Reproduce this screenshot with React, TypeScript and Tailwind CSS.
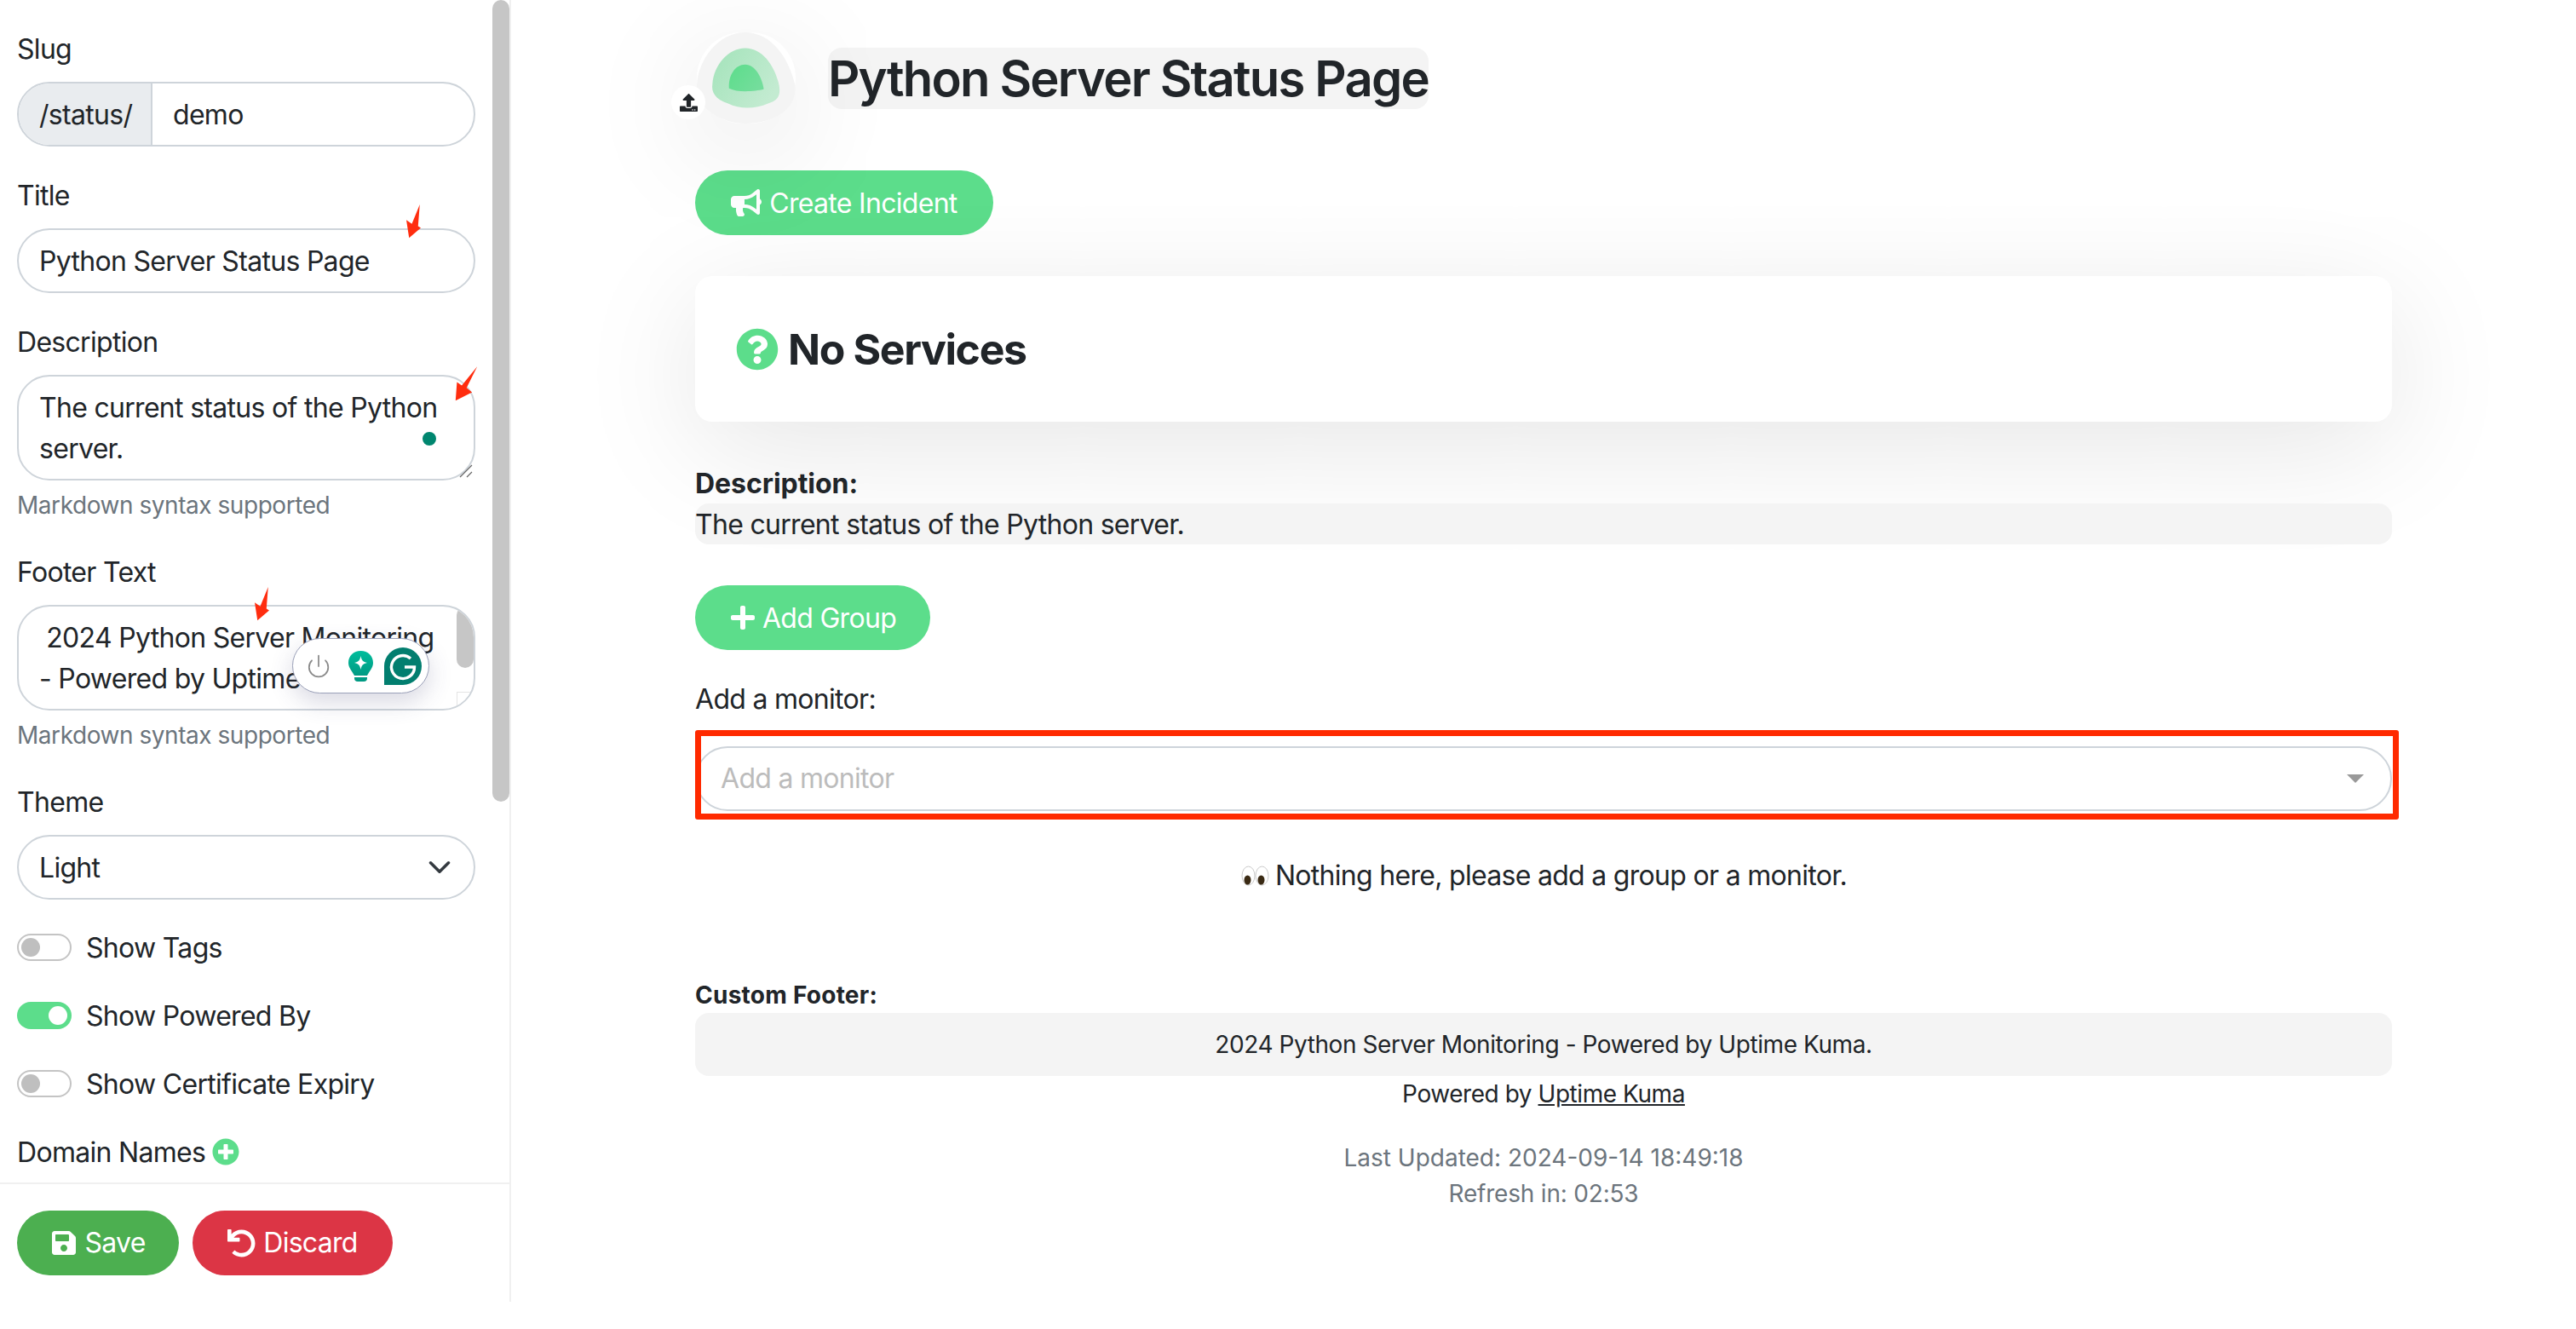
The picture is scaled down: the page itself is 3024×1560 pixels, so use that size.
import { Power } from "lucide-react";
import { FaBullhorn, FaPlus, FaPlusCircle, FaQuestionCircle, FaSave, FaUndo, FaUpload } from "react-icons/fa";

function Label({ children }: { children: string }) {
  return <div className="mb-[14px] pt-[2px]">{children}</div>;
}

function Toggle({ on, label }: { on?: boolean; label: string }) {
  return (
    <div className="mb-[32px] flex h-[48px] items-center">
      {on ? (
        <div className="flex h-[32px] w-[64px] items-center justify-end rounded-full bg-[#5cdd8b] pr-[5px]">
          <div className="h-[22px] w-[22px] rounded-full bg-white" />
        </div>
      ) : (
        <div className="flex h-[32px] w-[64px] items-center rounded-full border-2 border-[#c4c4c4] bg-white pl-[3px]">
          <div className="h-[22px] w-[22px] rounded-full bg-[#bfbfbf]" />
        </div>
      )}
      <span className="ml-[17px] pt-[2px]">{label}</span>
    </div>
  );
}

function ResizeGrip({ className }: { className: string }) {
  return (
    <svg className={`absolute ${className}`} width="16" height="16" viewBox="0 0 16 16" stroke="#666" strokeWidth="1.2">
      <path d="M1 15 15 1M9 15l6-6" />
    </svg>
  );
}

function Logo() {
  return (
    <div className="relative h-[107px] w-[116px] rounded-full shadow-[0_30px_140px_rgba(0,0,0,0.13)]">
      <svg className="h-full w-full" viewBox="115 55 347 320">
        <defs>
          <linearGradient id="mid" x1="0" y1="0" x2="1" y2="0.6">
            <stop offset="0" stopColor="#a3e3ba" />
            <stop offset="1" stopColor="#c3ebd1" />
          </linearGradient>
          <linearGradient id="core" x1="0" y1="0" x2="1" y2="0.6">
            <stop offset="0" stopColor="#5cdd8b" />
            <stop offset="1" stopColor="#74dd9c" />
          </linearGradient>
        </defs>
        <path d="M285 55C380 55 440 150 460 240C470 320 390 375 285 375C200 375 110 320 115 240C120 150 190 55 285 55Z" fill="#f4f4f4" />
        <path d="M285 110C345 110 385 170 400 225C415 275 400 295 365 305C320 325 265 325 225 305C180 290 165 265 170 235C175 170 225 110 285 110Z" fill="url(#mid)" />
        <path d="M285 168C320 168 345 215 350 255C320 262 260 268 228 252C225 205 250 168 285 168Z" fill="url(#core)" />
      </svg>
      <div className="absolute left-[-30px] top-[62px] flex h-[40px] w-[40px] items-center justify-center rounded-full bg-white text-[#212529]">
        <FaUpload size={21} />
      </div>
    </div>
  );
}

function GrammarlyPill() {
  return (
    <div className="absolute left-[343px] top-[749px] z-10 flex h-[65px] w-[161px] items-center rounded-full border border-[#9aa0b8] bg-white shadow-[0_10px_28px_rgba(60,60,110,0.2)]">
      <Power className="ml-[15px] text-[#8a8a8a]" size={30} strokeWidth={1.4} />
      <svg className="ml-[20px]" width="29" height="36" viewBox="0 0 29 36">
        <defs>
          <linearGradient id="bulb" x1="0" y1="0" x2="0" y2="1">
            <stop offset="0" stopColor="#00bd9c" />
            <stop offset="1" stopColor="#009a83" />
          </linearGradient>
        </defs>
        <path d="M14.5 0C23 0 29 6 29 14C29 20 25 23 22 29H7C4 23 0 20 0 14C0 6 6 0 14.5 0Z" fill="url(#bulb)" />
        <path d="M7 31H22V32A4 4 0 0 1 18 36H11A4 4 0 0 1 7 32Z" fill="#009a83" />
        <path d="M14.5 6C15.5 11 17 13 22 14C17 15 15.5 17 14.5 22C13.5 17 12 15 7 14C12 13 13.5 11 14.5 6Z" fill="#fff" />
      </svg>
      <svg className="ml-[13px]" width="44" height="44" viewBox="0 0 44 44">
        <path d="M22 0A22 22 0 0 1 22 44H0V22A22 22 0 0 1 22 0Z" fill="#027e6f" />
        <path d="M31 13A13.5 13.5 0 1 0 35.5 23H24" fill="none" stroke="#fff" strokeWidth="3.4" />
      </svg>
    </div>
  );
}

function Sidebar() {
  return (
    <aside className="relative z-10 flex h-[1528px] w-[600px] shrink-0 flex-col border-r-2 border-[#f0f0f0] bg-white">
      <div className="h-[1388px] overflow-hidden px-[20px] pt-[32px]">
        <div className="w-[538px]">
          <Label>Slug</Label>
          <div className="mb-[32px] flex h-[76px] overflow-hidden rounded-full border-2 border-[#ced4da]">
            <div className="flex w-[157px] items-center border-r-2 border-[#ced4da] bg-[#e9ecef] pl-[24px] pt-[2px]">/status/</div>
            <div className="flex items-center pl-[24px] pt-[2px]">demo</div>
          </div>

          <Label>Title</Label>
          <div className="mb-[32px] flex h-[76px] items-center rounded-full border-2 border-[#ced4da] pl-[24px] pt-[2px]">Python Server Status Page</div>

          <Label>Description</Label>
          <div className="relative h-[124px] rounded-[38px] border-2 border-[#ced4da] pl-[24px] pt-[13px]">
            <div>The current status of the Python</div>
            <div>server.</div>
            <div className="absolute left-[474px] top-[65px] h-[16px] w-[16px] rounded-full bg-[#00866f]" />
            <ResizeGrip className="bottom-[1px] right-[1px]" />
          </div>
          <div className="mb-[32px] mt-[8px] text-[28px] leading-[42px] tracking-[-0.45px] text-[#6c757d]">Markdown syntax supported</div>

          <Label>Footer Text</Label>
          <div className="relative h-[124px] overflow-hidden rounded-[38px] border-2 border-[#ced4da] pl-[24px] pt-[13px]">
            <div className="whitespace-pre"> 2024 Python Server Monitoring</div>
            <div>- Powered by Uptime Kuma.</div>
            <div className="absolute right-0 top-0 h-[72px] w-[20px] rounded-full bg-[#c6c6c6]" />
            <div className="absolute bottom-0 right-0 h-[20px] w-[20px] border-l border-t border-[#e4e4e4] bg-white" />
            <ResizeGrip className="bottom-[1px] right-[1px]" />
          </div>
          <div className="mb-[32px] mt-[8px] text-[28px] leading-[42px] tracking-[-0.45px] text-[#6c757d]">Markdown syntax supported</div>

          <Label>Theme</Label>
          <div className="mb-[32px] flex h-[76px] items-center justify-between rounded-full border-2 border-[#ced4da] pl-[24px] pr-[26px]">
            <span className="pt-[2px]">Light</span>
            <svg width="28" height="28" viewBox="0 0 16 16" fill="none" stroke="#343a40" strokeWidth="2" strokeLinecap="round" strokeLinejoin="round">
              <path d="m2 5 6 6 6-6" />
            </svg>
          </div>

          <Toggle label="Show Tags" />
          <Toggle on label="Show Powered By" />
          <Toggle label="Show Certificate Expiry" />

          <div className="flex h-[48px] items-center">
            <span className="pt-[2px]">Domain Names</span>
            <FaPlusCircle className="ml-[8px] text-[#5cdd8b]" size={32} />
          </div>
        </div>
      </div>
      <div className="flex h-[140px] gap-[16px] border-t-2 border-[#f0f0f0] pl-[20px] pt-[31px]">
        <button className="flex h-[76px] w-[190px] items-center justify-center gap-[8px] rounded-full bg-[#4caf50] text-white">
          <FaSave size={32} />
          Save
        </button>
        <button className="flex h-[76px] w-[235px] items-center justify-center gap-[9px] rounded-full bg-[#dc3545] text-white">
          <FaUndo size={33} />
          Discard
        </button>
      </div>
      <div className="absolute right-0 top-0 h-[941px] w-[20px] rounded-full bg-[#c6c6c6]" />
    </aside>
  );
}

function Eyes() {
  return (
    <svg className="mr-[6px]" width="35" height="28" viewBox="0 0 32 28">
      <ellipse cx="8" cy="14" rx="7.5" ry="11" fill="#fff" stroke="#c9c9c9" />
      <ellipse cx="24" cy="14" rx="7.5" ry="11" fill="#fff" stroke="#c9c9c9" />
      <ellipse cx="7" cy="19" rx="4" ry="5.5" fill="#3a2a14" />
      <ellipse cx="23" cy="19" rx="4" ry="5.5" fill="#3a2a14" />
    </svg>
  );
}

function Main() {
  return (
    <main className="ml-[216px] w-[1992px]">
      <header className="flex h-[200px] items-start pl-[2px] pt-[38px]">
        <Logo />
        <h1 className="ml-[38px] mt-[18px] h-[72px] whitespace-nowrap rounded-[16px] bg-[#f4f4f4] text-[58px] font-semibold leading-[72px] tracking-[-1.8px]">
          Python Server Status Page
        </h1>
      </header>

      <button className="flex h-[76px] w-[350px] items-center justify-center gap-[9px] rounded-full bg-[#5cdd8b] text-white">
        <FaBullhorn size={36} />
        <span className="pt-[2px]">Create Incident</span>
      </button>

      <section className="mt-[48px] flex h-[171px] items-center rounded-[20px] bg-white pl-[48px] shadow-[0_30px_140px_rgba(0,0,0,0.1)]">
        <FaQuestionCircle className="text-[#5cdd8b]" size={50} />
        <h2 className="ml-[11px] text-[50px] font-bold tracking-[-1.4px]">No Services</h2>
      </section>

      <div className="relative mt-[49px] font-bold tracking-[-0.05px]">Description:</div>
      <div className="relative mt-[-1px] h-[48px] rounded-[16px] bg-[#f4f4f4] pt-[1px]">The current status of the Python server.</div>

      <button className="mt-[48px] flex h-[76px] w-[276px] items-center justify-center gap-[7px] rounded-full bg-[#5cdd8b] text-white">
        <FaPlus size={32} />
        <span className="pt-[1px]">Add Group</span>
      </button>

      <div className="mt-[34px]">Add a monitor:</div>
      <div className="mt-[31px] flex h-[76px] items-center justify-between rounded-full border-2 border-[#ced4da] pl-[28px] pr-[31px]">
        <span className="text-[#bcbcbc]">Add a monitor</span>
        <div className="h-0 w-0 border-x-[10px] border-t-[10px] border-x-transparent border-t-[#999]" />
      </div>

      <div className="mt-[52px] flex items-center justify-center">
        <Eyes />
        Nothing here, please add a group or a monitor.
      </div>

      <div className="mt-[95px] text-[28px] font-bold leading-[42px] tracking-[0.25px]">Custom Footer:</div>
      <div className="flex h-[74px] items-center justify-center rounded-[16px] bg-[#f4f4f4] text-[28px] tracking-[-0.42px]">
        2024 Python Server Monitoring - Powered by Uptime Kuma.
      </div>
      <div className="text-center text-[28px] leading-[42px] tracking-[-0.45px]">
        Powered by <span className="underline">Uptime Kuma</span>
      </div>
      <div className="mt-[33px] text-center text-[28px] leading-[42px] tracking-normal text-[#6c757d]">
        <div>Last Updated: 2024-09-14 18:49:18</div>
        <div className="tracking-[-0.2px]">Refresh in: 02:53</div>
      </div>
    </main>
  );
}

function ThinArrow({ className }: { className: string }) {
  return (
    <svg className={`absolute z-20 ${className}`} width="17" height="41" viewBox="1170 585 42 100" fill="#ff2d0f">
      <path d="M1209 587 1204 650 1212 655 1178 684 1170 632 1186 643Z" />
    </svg>
  );
}

export default function App() {
  return (
    <div className="relative flex min-h-[1560px] w-[3024px] overflow-hidden bg-white font-['Inter',sans-serif] text-[32px] leading-[48px] tracking-[-0.7px] text-[#212529]">
      <Sidebar />
      <Main />

      <GrammarlyPill />

      {/* annotations on top of the screenshot */}
      <div className="pointer-events-none absolute left-[816px] top-[857px] z-20 h-[105px] w-[2000px] rounded-[3px] border-[7px] border-[#ff2a00]" />
      <ThinArrow className="left-[477px] top-[239px]" />
      <svg className="absolute left-[534px] top-[429px] z-20" width="27" height="42" viewBox="1308 1050 67 104" fill="#ff2d0f">
        <path d="M1373 1053 1342 1115 1358 1128 1310 1152 1314 1098 1328 1108Z" />
      </svg>
      <ThinArrow className="left-[299px] top-[688px]" />
    </div>
  );
}
